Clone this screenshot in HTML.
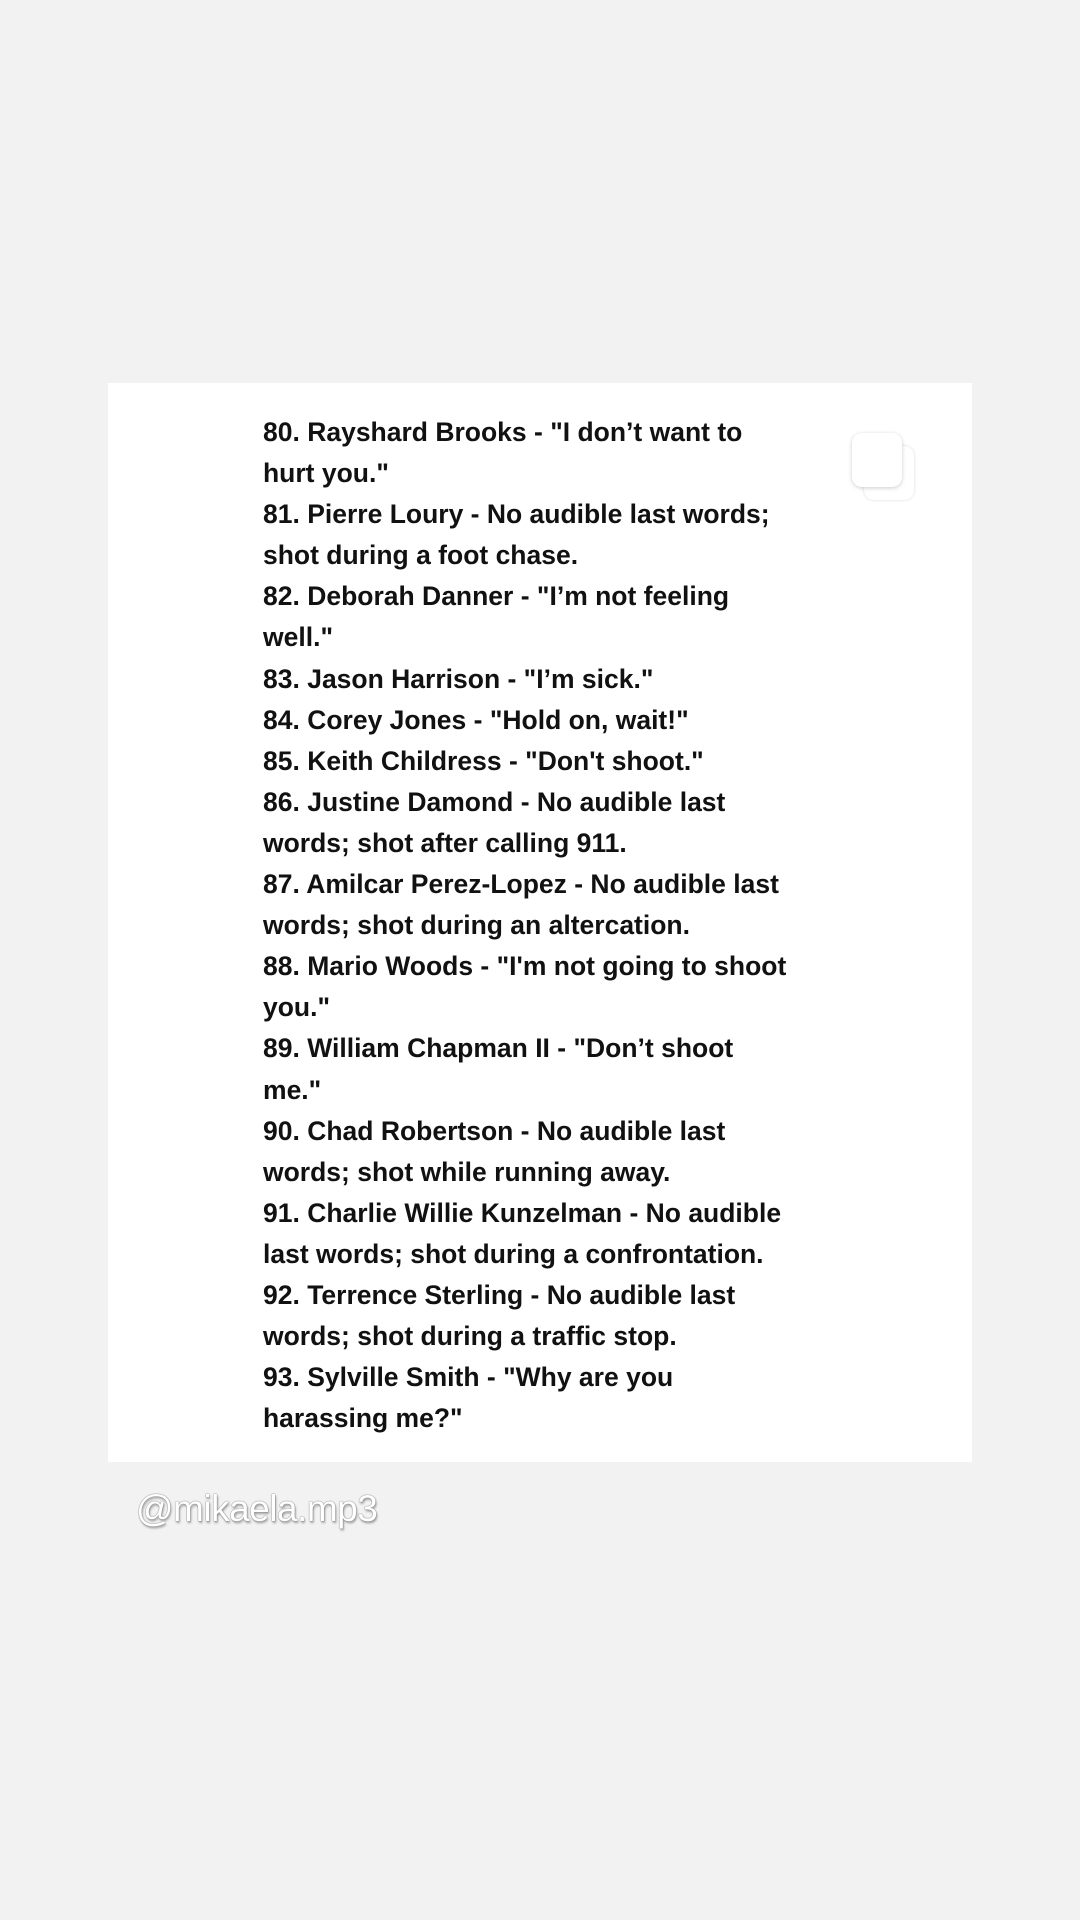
<!DOCTYPE html>
<html><head><meta charset="utf-8"><style>
html,body{margin:0;padding:0;width:1080px;height:1920px;background:#f2f2f2;overflow:hidden}
.card{position:absolute;left:108px;top:383px;width:864px;height:1079px;background:#fff}
.txt{position:absolute;left:263px;top:412px;font-family:"Liberation Sans",sans-serif;font-weight:bold;font-size:26.5px;letter-spacing:0px;line-height:41.1px;color:#111;white-space:nowrap}
.sq{position:absolute;width:50px;height:54px;border-radius:10px;background:#fff}
.wm{position:absolute;left:136px;top:1488px;font-family:"Liberation Sans",sans-serif;font-size:37px;color:#fff;letter-spacing:-0.5px;text-shadow:0 0 1px #777,0 0 1px #777,1px 2px 2px rgba(0,0,0,.35)}
</style></head><body>
<div class="card"></div>
<div class="sq" style="left:864px;top:446px;box-shadow:0 0 3px rgba(0,0,0,.15)"></div>
<div class="sq" style="left:852px;top:433px;box-shadow:0 1px 4px rgba(0,0,0,.2)"></div>
<div class="txt">80. Rayshard Brooks - "I don’t want to<br>hurt you."<br>81. Pierre Loury - No audible last words;<br>shot during a foot chase.<br>82. Deborah Danner - "I’m not feeling<br>well."<br>83. Jason Harrison - "I’m sick."<br>84. Corey Jones - "Hold on, wait!"<br>85. Keith Childress - "Don't shoot."<br>86. Justine Damond - No audible last<br>words; shot after calling 911.<br>87. Amilcar Perez-Lopez - No audible last<br>words; shot during an altercation.<br>88. Mario Woods - "I'm not going to shoot<br>you."<br>89. William Chapman II - "Don’t shoot<br>me."<br>90. Chad Robertson - No audible last<br>words; shot while running away.<br>91. Charlie Willie Kunzelman - No audible<br>last words; shot during a confrontation.<br>92. Terrence Sterling - No audible last<br>words; shot during a traffic stop.<br>93. Sylville Smith - "Why are you<br>harassing me?"</div>
<div class="wm">@mikaela.mp3</div>
</body></html>
